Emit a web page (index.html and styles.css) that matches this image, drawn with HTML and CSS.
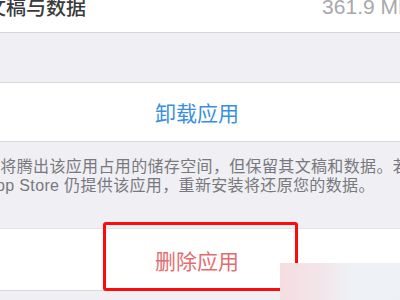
FILE: index.html
```html
<!DOCTYPE html>
<html lang="zh-CN">
<head>
<meta charset="utf-8">
<title>卸载应用</title>
<link rel="stylesheet" href="styles.css">
</head>
<body>
<div class="screen">
  <div class="row row-info">
    <span class="label">文稿与数据</span>
    <span class="value">361.9 MB</span>
  </div>
  <div class="spacer"></div>
  <div class="row row-action">
    <span class="action action-blue">卸载应用</span>
  </div>
  <div class="footnote">
    <div class="line line-1">这将腾出该应用占用的储存空间，但保留其文稿和数据。若</div>
    <div class="line line-2">App Store 仍提供该应用，重新安装将还原您的数据。</div>
  </div>
  <div class="row row-action row-delete">
    <span class="action action-red">删除应用</span>
    <div class="highlight"></div>
  </div>
  <div class="watermark"></div>
</div>
</body>
</html>
```
FILE: styles.css
```css
html, body {
  margin: 0;
  padding: 0;
  width: 400px;
  height: 300px;
  overflow: hidden;
  background: #efeff4;
  font-family: "Liberation Sans", "Noto Sans CJK SC", sans-serif;
}

.screen {
  position: relative;
  width: 400px;
  height: 300px;
  overflow: hidden;
}

.row {
  background: #ffffff;
  display: flex;
}

.row-info {
  height: 33px;
  box-sizing: border-box;
  align-items: flex-end;
  justify-content: space-between;
  padding-bottom: 15px;
  border-bottom: 1px solid #d6d6da;
  font-size: 20px;
  line-height: 20px;
}

.label {
  margin-left: -14px;
  color: #3a3a3c;
  font-family: "Noto Sans CJK SC", sans-serif;
  font-weight: 500;
}

.value {
  margin-right: -12px;
  color: #a8a8ad;
  font-size: 21px;
}

.spacer {
  height: 49px;
}

.row-action {
  border-top: 1px solid #d9d9dd;
  border-bottom: 1px solid #d9d9dd;
  justify-content: center;
  align-items: center;
  height: 58px;
}

.action {
  font-family: "Noto Sans CJK SC", sans-serif;
  font-size: 21px;
  line-height: 24px;
  margin-left: -6px;
}

.action-blue {
  color: #3a8fe2;
}

.action-red {
  color: #e36c70;
}

.footnote {
  padding: 15px 0 33px;
  font-size: 16px;
  line-height: 19px;
  letter-spacing: 0.35px;
  color: #78787d;
  font-family: "Liberation Sans", "Noto Sans CJK SC", sans-serif;
  white-space: nowrap;
}

.line-1 {
  margin-left: -16px;
}

.line-2 {
  margin-left: -15px;
}

.row-delete {
  position: relative;
  height: 61px;
  border-top-color: #e3e3e7;
}

.highlight {
  position: absolute;
  left: 103px;
  top: -7px;
  width: 195px;
  height: 69px;
  box-sizing: border-box;
  border: 3px solid #ff0a0a;
  border-radius: 3px;
}

.watermark {
  position: absolute;
  left: 280px;
  top: 263px;
  width: 120px;
  height: 37px;
  background: linear-gradient(to right, #f5dde1 0%, #f2e6ea 35%, #eef1f5 60%, #edf0f4 100%);
}
```
